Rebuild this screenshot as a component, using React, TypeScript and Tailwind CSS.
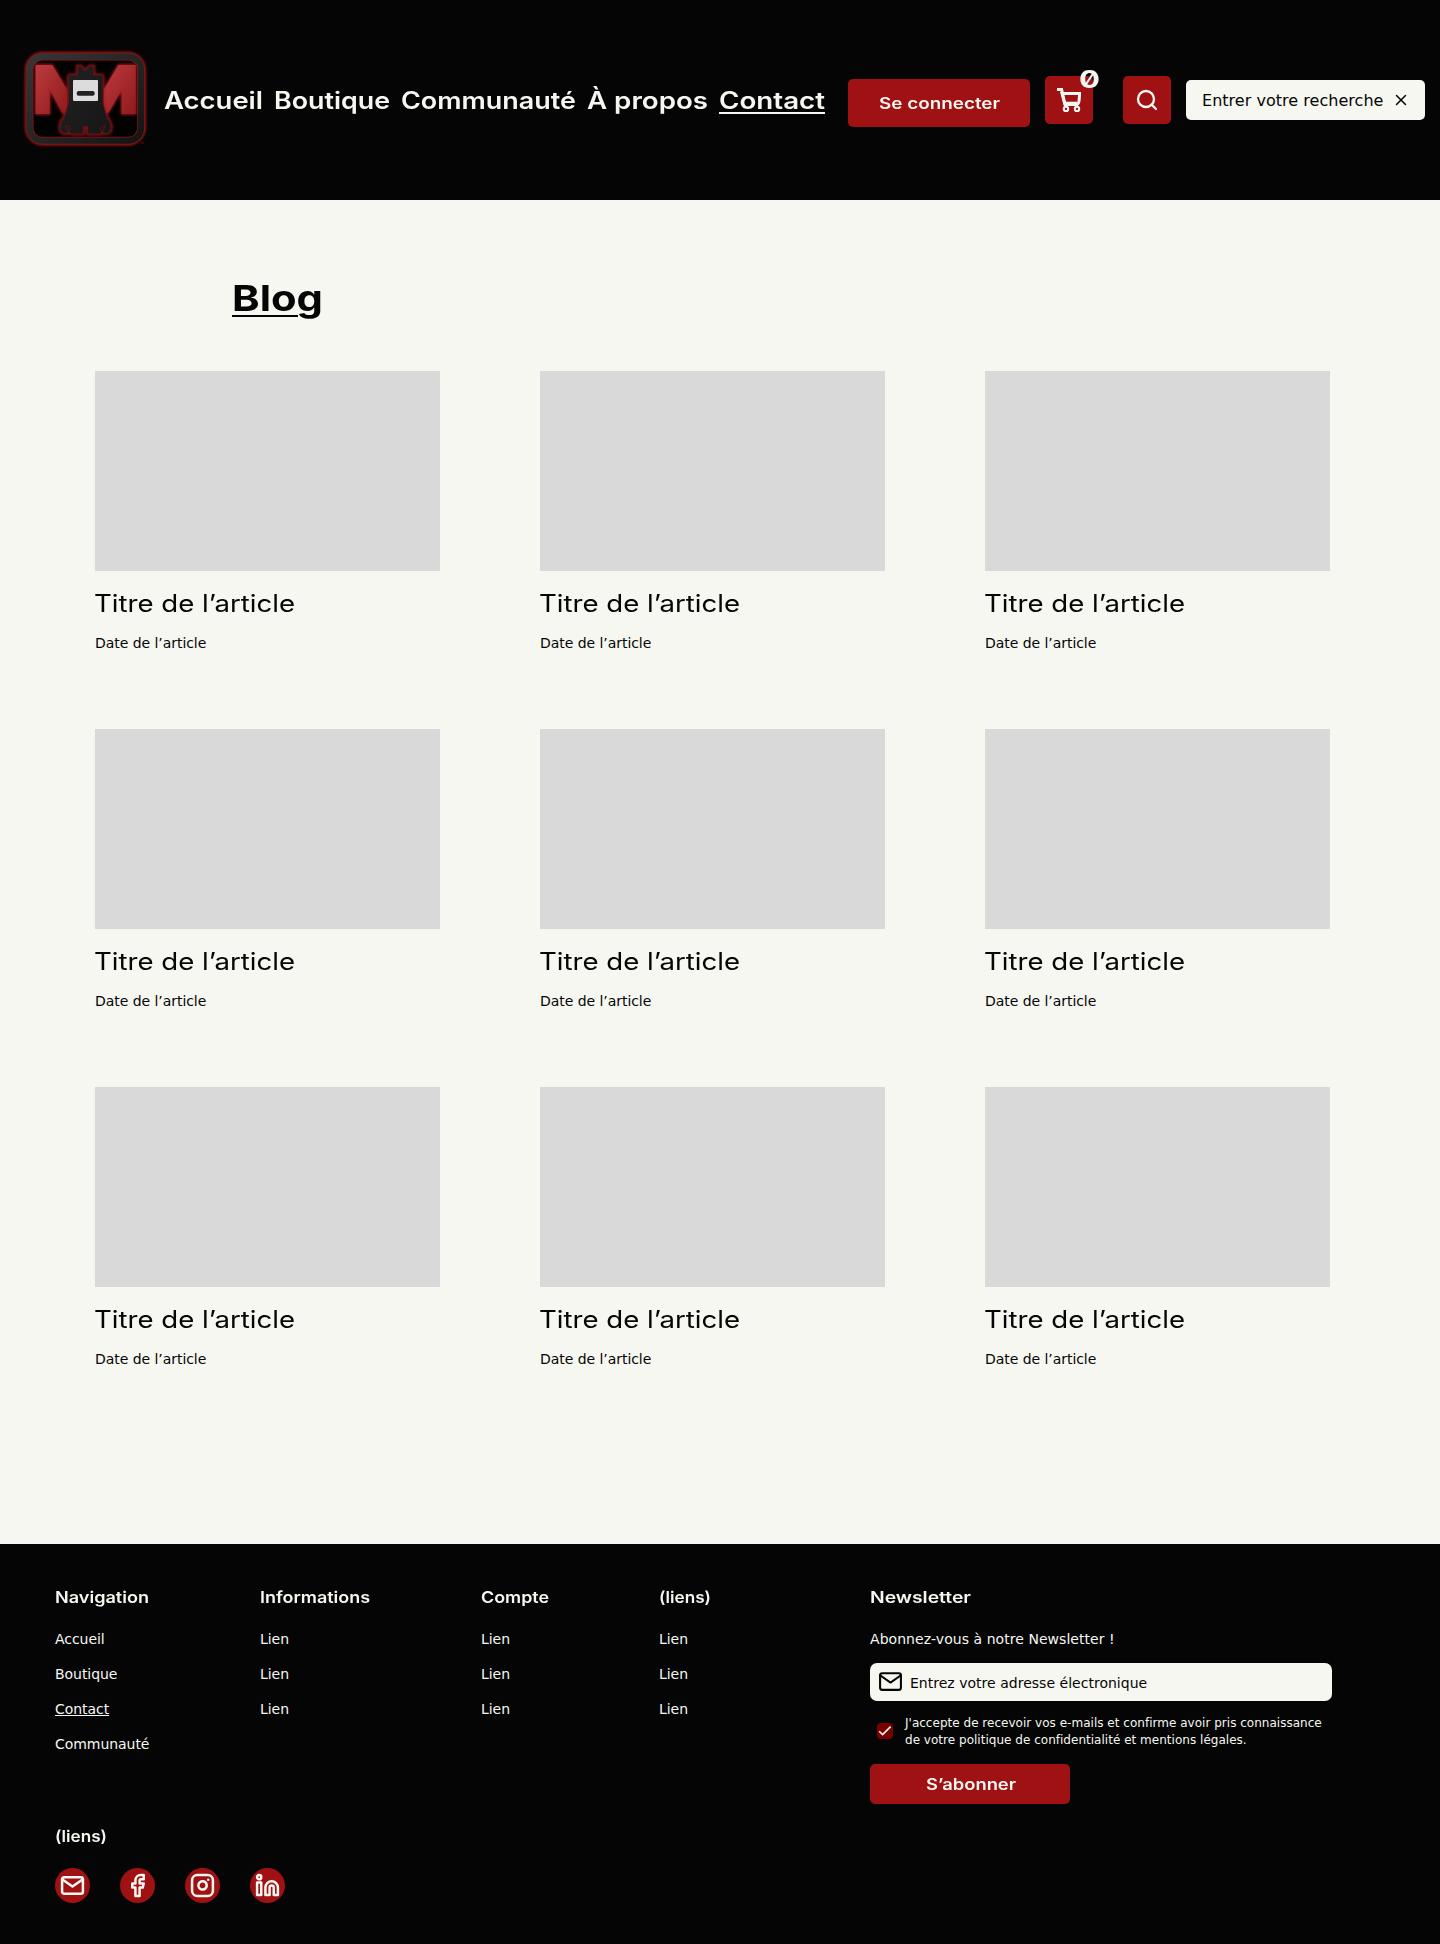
import { useLayoutEffect, useRef, useState } from "react";
import { FiFacebook, FiInstagram, FiLinkedin, FiMail, FiSearch, FiX } from "react-icons/fi";

/** Display lettering stretched horizontally so that it fills its box. */
function Wide({ text, className = "", textClass = "" }: { text: string; className?: string; textClass?: string }) {
  const outer = useRef<HTMLSpanElement>(null);
  const inner = useRef<HTMLSpanElement>(null);
  const [scale, setScale] = useState(1);
  useLayoutEffect(() => {
    if (outer.current && inner.current) {
      setScale(outer.current.offsetWidth / inner.current.getBoundingClientRect().width);
    }
  }, []);
  return (
    <span ref={outer} className={`block text-left whitespace-nowrap font-['Inter',sans-serif] ${className}`}>
      <span
        ref={inner}
        className={`inline-block origin-left align-top ${textClass}`}
        style={{ transform: `scaleX(${scale})` }}
      >
        {text}
      </span>
    </span>
  );
}

function Logo() {
  const body =
    "M187 78H198L211 93L224 78H236V105H260Q264 106 264 112V190L276 232Q290 250 288 266Q284 282 268 280Q257 277 257 266Q260 256 272 258Q264 264 266 270L256 282H218V260H205V282H168L156 270Q160 264 150 258Q164 255 166 266Q166 277 155 280Q138 282 135 266Q133 250 147 232L160 190V112Q160 106 164 105H187Z";
  return (
    <svg viewBox="0 0 420 345" className="-mt-[5px] h-[115px] w-[140px] shrink-0" role="img" aria-label="Logo">
      <defs>
        <filter id="glow" x="-20%" y="-20%" width="140%" height="140%">
          <feGaussianBlur stdDeviation="4" />
        </filter>
        <linearGradient id="red" x1="0" y1="0" x2="1" y2="1">
          <stop offset="0" stopColor="#bd3a3d" />
          <stop offset="1" stopColor="#8f1a1d" />
        </linearGradient>
        <linearGradient id="steel" x1="0" y1="0" x2="1" y2="1">
          <stop offset="0" stopColor="#363636" />
          <stop offset="1" stopColor="#141414" />
        </linearGradient>
        <linearGradient id="cloak" x1="0" y1="0" x2="1" y2="1">
          <stop offset="0" stopColor="#222222" />
          <stop offset="1" stopColor="#161616" />
        </linearGradient>
      </defs>
      <rect x="44" y="50" width="334" height="252" rx="40" fill="none" stroke="#a81519" strokeWidth="28" filter="url(#glow)" />
      <rect x="44" y="50" width="334" height="252" rx="38" fill="#020202" stroke="#8d1417" strokeWidth="23" />
      <rect x="44" y="50" width="334" height="252" rx="38" fill="none" stroke="url(#steel)" strokeWidth="19" />
      <g stroke="#a51a1e" strokeWidth="4" filter="url(#glow)" fill="#a51a1e">
        <path d="M62 75H112L156 150V218H142L104 148V222H62Z" />
        <path d="M362 75H310L266 150V218H280L320 150V222H362Z" />
      </g>
      <g fill="url(#red)">
        <path d="M62 75H112L156 150V218H142L104 148V222H62Z" />
        <path d="M362 75H310L266 150V218H280L320 150V222H362Z" />
      </g>
      <path d={body} fill="none" stroke="#a31519" strokeWidth="8" filter="url(#glow)" />
      <path d={body} fill="url(#cloak)" stroke="#7d1114" strokeWidth="2" />
      <rect x="174" y="120" width="75" height="63" rx="3" fill="#dcdcdc" />
      <rect x="185" y="153" width="54" height="14" rx="6" fill="#222" />
      <text x="368" y="313" fontSize="13" fontWeight="700" fill="#000" stroke="#6d0f12" strokeWidth="0.7" fontFamily="Liberation Sans">
        TM
      </text>
    </svg>
  );
}

function CartIcon() {
  return (
    <svg viewBox="0 0 24 24" className="size-6" fill="none" stroke="#f6f7f1" strokeWidth="2" aria-hidden="true">
      <path d="M0 1.5H4.6L8 16.5" strokeWidth="3" />
      <path d="M5 5.6H22.7L22 13.2Q21.6 15.8 20 16.6H8Z" strokeWidth="3" />
      <path d="M7.5 15.8H20.3" strokeWidth="4.2" />
      <circle cx="9" cy="21" r="2.2" strokeWidth="2.1" />
      <circle cx="20" cy="21" r="2.2" strokeWidth="2.1" />
    </svg>
  );
}

const columns = [
  { title: "Navigation", box: "w-[94px]", col: "w-[205px]", links: ["Accueil", "Boutique", "Contact", "Communauté"] },
  { title: "Informations", box: "w-[110px]", col: "w-[221px]", links: ["Lien", "Lien", "Lien"] },
  { title: "Compte", box: "w-[68px]", col: "w-[178px]", links: ["Lien", "Lien", "Lien"] },
  { title: "(liens)", box: "w-[52px]", col: "w-[211px]", links: ["Lien", "Lien", "Lien"] },
];

export default function App() {
  return (
    <div className="w-[1440px] bg-[#f6f7f1] font-['DejaVu_Sans',sans-serif] text-[#050505]">
      <header className="flex h-[200px] items-center bg-[#050505] pl-[15px] text-[#f6f7f1]">
        <Logo />
        <nav className="mt-[2px] ml-[9px] flex gap-[11px] text-2xl leading-[30px] font-semibold">
          <Wide text="Accueil" className="w-[99px]" />
          <Wide text="Boutique" className="w-[116px]" />
          <Wide text="Communauté" className="w-[175px]" />
          <Wide text="À propos" className="w-[121px]" />
          <Wide
            text="Contact"
            className="w-[106px]"
            textClass="underline decoration-[1.5px] underline-offset-[3px]"
          />
        </nav>
        <button className="mt-[6px] ml-[23px] flex h-12 w-[182px] items-center justify-center rounded-[5px] bg-[#9f1113] text-base font-semibold">
          <Wide text="Se connecter" className="w-[121px]" />
        </button>
        <button className="relative ml-[15px] flex size-12 items-center justify-center rounded-[5px] bg-[#9f1113]">
          <CartIcon />
          <span className="absolute -top-[8px] left-[34px] text-2xl leading-[24px] font-bold [font-feature-settings:'zero'_1]">
            <Wide text="0" className="w-[21px]" />
          </span>
        </button>
        <button className="ml-[30px] flex size-12 items-center justify-center rounded-[5px] bg-[#9f1113]">
          <FiSearch className="size-6" strokeWidth={2.3} />
        </button>
        <div className="ml-[15px] flex h-10 w-[239px] items-center rounded-[5px] bg-[#f6f7f1] pl-4 text-base text-[#050505]">
          <span className="w-[190px] translate-y-[1px] tracking-[0.03px] whitespace-nowrap">Entrer votre recherche</span>
          <FiX className="size-[18px]" />
        </div>
      </header>

      <main className="h-[1344px] pt-[76px]">
        <h1 className="ml-[232px] text-4xl leading-[44px] font-bold">
          <Wide text="Blog" className="w-[91px]" textClass="underline decoration-2 underline-offset-[4px]" />
        </h1>
        <div className="mt-[51px] ml-[95px] grid grid-cols-[345px_345px_345px] gap-x-[100px]">
          {Array.from({ length: 9 }, (_, i) => (
            <article key={i} className="h-[358px]">
              <div className="h-[200px] bg-[#d9d9d9]" />
              <h2 className="mt-[18px] -ml-px text-2xl leading-[30px]">
                <Wide text="Titre de l’article" className="w-[201px]" />
              </h2>
              <p className="mt-[14px] text-sm leading-5 tracking-[-0.05px]">Date de l’article</p>
            </article>
          ))}
        </div>
      </main>

      <footer className="h-[400px] bg-[#050505] pt-[43px] pl-[55px] text-[#f6f7f1]">
        <div className="flex h-[239px]">
          {columns.map((c) => (
            <section key={c.title} className={c.col}>
              <h3 className="text-base leading-5 font-semibold">
                <Wide text={c.title} className={c.box} />
              </h3>
              <ul className="mt-[22px] flex flex-col gap-[15px] text-sm leading-5 tracking-[-0.05px]">
                {c.links.map((l, i) => (
                  <li key={i} className={l === "Contact" ? "underline" : ""}>
                    {l}
                  </li>
                ))}
              </ul>
            </section>
          ))}
          <section className="w-[462px]">
            <h3 className="text-base leading-5 font-semibold">
              <Wide text="Newsletter" className="w-[101px]" />
            </h3>
            <p className="mt-[22px] text-sm leading-5 tracking-[0.05px]">Abonnez-vous à notre Newsletter !</p>
            <div className="mt-[14px] flex h-[38px] items-center rounded-[7px] bg-[#f6f7f1] pl-2 text-sm text-[#050505]">
              <FiMail className="size-[25px] -translate-y-[1px]" />
              <span className="ml-[7px] translate-y-[1px] tracking-[0.02px]">Entrez votre adresse électronique</span>
            </div>
            <div className="mt-[14px] flex pl-[7px]">
              <span className="mt-[8px] flex size-4 shrink-0 items-center justify-center rounded-[4px] bg-[#7a0000]">
                <svg viewBox="0 0 16 16" className="size-4" fill="none" stroke="#f6f7f1" strokeWidth="1.6" aria-hidden="true">
                  <path d="M2.2 8.2L5.6 11.6L13.6 3.6" />
                </svg>
              </span>
              <p className="ml-3 text-xs leading-[17px] tracking-[0.02px] whitespace-nowrap">
                J'accepte de recevoir vos e-mails et confirme avoir pris connaissance
                <br />
                de votre politique de confidentialité et mentions légales.
              </p>
            </div>
            <button className="mt-[15px] flex h-10 w-[200px] items-center justify-center rounded-[5px] bg-[#9f1113] pl-[2px] text-base font-semibold">
              <Wide text="S’abonner" className="w-[90px]" />
            </button>
          </section>
        </div>
        <h3 className="text-base leading-5 font-semibold">
          <Wide text="(liens)" className="w-[52px]" />
        </h3>
        <div className="mt-[22px] flex gap-[30px]">
          {[FiMail, FiFacebook, FiInstagram, FiLinkedin].map((Icon, i) => (
            <span key={i} className="flex size-[35px] items-center justify-center rounded-full bg-[#9f1113]">
              <Icon className="size-[25px]" strokeWidth={2.4} />
            </span>
          ))}
        </div>
      </footer>
    </div>
  );
}
